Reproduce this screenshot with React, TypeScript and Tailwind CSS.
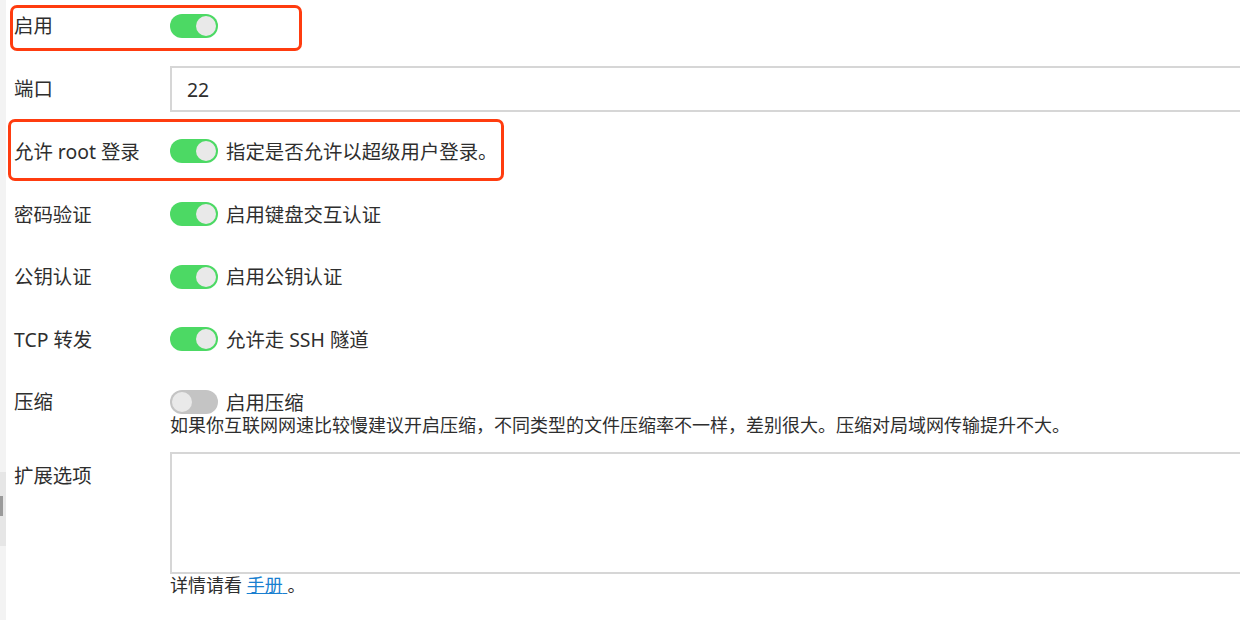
import React from "react";

const Toggle: React.FC<{ on?: boolean }> = ({ on = true }) => (
    <span
        className={
            "relative inline-block w-[48px] h-[24px] rounded-full shrink-0 " +
            (on ? "bg-[#4cd964]" : "bg-[#c4c4c4]")
        }
    >
        <span
            className={
                "absolute top-[2px] w-[20px] h-[20px] rounded-full bg-[#e9e9e9] " +
                (on ? "right-[2px]" : "left-[2px]")
            }
        />
    </span>
);

const Row: React.FC<{ label: string; children?: React.ReactNode }> = ({ label, children }) => (
    <div className="flex items-center h-[46px]">
        <div className="w-[156px] shrink-0">{label}</div>
        <div className="flex items-center gap-[8px]">{children}</div>
    </div>
);

const App: React.FC = () => {
    return (
        <div
            className="relative w-[1240px] h-[620px] overflow-hidden bg-white text-[19.4px] text-[#2e2e2e]"
            style={{ fontFamily: '"Noto Sans", "Noto Sans CJK SC", sans-serif' }}
        >
            {/* left scroll strip */}
            <div className="absolute left-0 top-0 w-[6px] h-full bg-[#f3f3f3]">
                <div className="absolute top-[472px] h-[74px] w-full bg-[#e6e6e6]" />
                <div className="absolute top-[496px] h-[20px] w-[3px] bg-[#9a9a9a]" />
            </div>

            <div className="flex flex-col gap-[16.7px] pt-[3px] pl-[14px]">
                {/* 启用 */}
                <div className="relative">
                    <Row label="启用">
                        <Toggle />
                    </Row>
                    <div className="absolute left-[-4px] top-[2px] w-[292px] h-[46px] border-[3px] border-[#ff3c0f] rounded-[7px]" />
                </div>

                {/* 端口 */}
                <Row label="端口">
                    <div className="w-[1090px] h-[46px] border-2 border-[#d6d6d6] flex items-center px-[15px] pt-[2px]">
                        22
                    </div>
                </Row>

                {/* 允许 root 登录 */}
                <div className="relative">
                    <Row label="允许 root 登录">
                        <Toggle />
                        <span>指定是否允许以超级用户登录。</span>
                    </Row>
                    <div className="absolute left-[-6px] top-[-9px] w-[496px] h-[62px] border-[3px] border-[#ff3c0f] rounded-[7px]" />
                </div>

                <Row label="密码验证">
                    <Toggle />
                    <span>启用键盘交互认证</span>
                </Row>

                <Row label="公钥认证">
                    <Toggle />
                    <span>启用公钥认证</span>
                </Row>

                <Row label="TCP 转发">
                    <Toggle />
                    <span>允许走 SSH 隧道</span>
                </Row>

                {/* 压缩 */}
                <div className="flex pt-[11px]">
                    <div className="w-[156px] shrink-0 h-[24px] leading-[24px]">压缩</div>
                    <div className="flex flex-col">
                        <div className="flex items-center gap-[8px] h-[24px]">
                            <Toggle on={false} />
                            <span>启用压缩</span>
                        </div>
                        <div className="text-[18px] leading-[22px]">
                            如果你互联网网速比较慢建议开启压缩，不同类型的文件压缩率不一样，差别很大。压缩对局域网传输提升不大。
                        </div>
                    </div>
                </div>

                {/* 扩展选项 */}
                <div className="flex -mt-[1px]">
                    <div className="w-[156px] shrink-0 pt-[12px] h-[36px] leading-[24px]">扩展选项</div>
                    <div className="flex flex-col">
                        <div className="w-[1090px] h-[122px] border-2 border-[#d6d6d6]" />
                        <div className="text-[18px] leading-[22px]">
                            详情请看{" "}
                            <a href="#" className="text-[#1a7fd0] underline">
                                手册{" "}
                            </a>
                            。
                        </div>
                    </div>
                </div>
            </div>
        </div>
    );
};

export default App;
